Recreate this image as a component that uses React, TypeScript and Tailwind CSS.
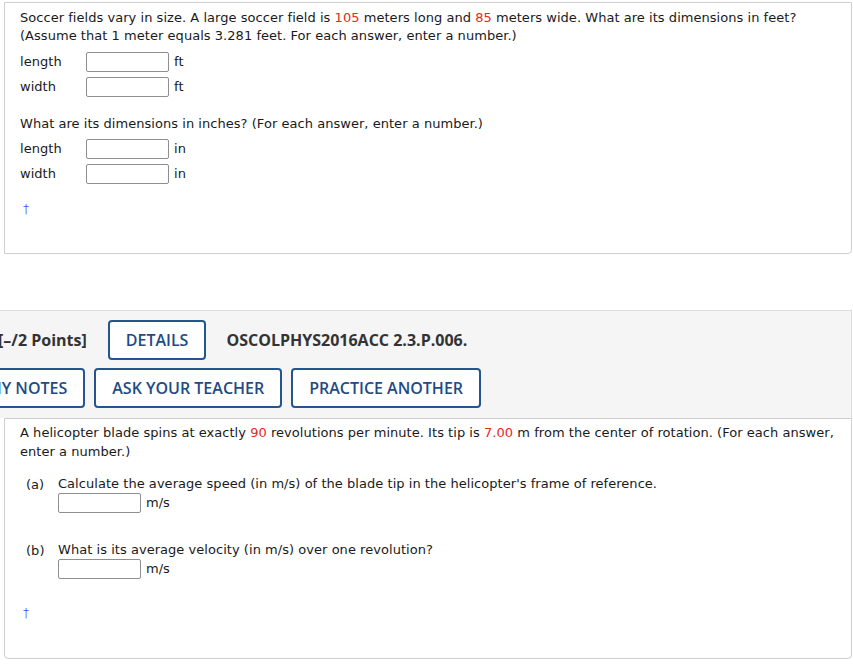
import React from "react";

const body = { fontFamily: '"DejaVu Sans", Verdana, sans-serif' };
const head = { fontFamily: '"Open Sans", "Noto Sans", sans-serif' };

function Box() {
  return <div className="w-[83px] h-[20px] border border-[#8f8f8f] rounded-[2px] bg-white" />;
}

function Row({ label, unit }: { label: string; unit: string }) {
  return (
    <div className="flex items-center h-[20px]">
      <span className="w-[66px]">{label}</span>
      <Box />
      <span className="ml-[5px]">{unit}</span>
    </div>
  );
}

function Btn({ children }: { children: React.ReactNode }) {
  return (
    <div className="h-[40px] px-[16px] flex items-center border-2 border-[#24558f] rounded-[4px] text-[#1f4b84] font-semibold text-[16px] whitespace-nowrap bg-white">
      {children}
    </div>
  );
}

export default function App() {
  return (
    <div className="w-[853px] h-[668px] bg-white overflow-hidden text-[13px] text-[#1a1a1a] tracking-[0.04px]" style={body}>
      <div className="h-[2px]" />
      <div className="ml-[4px] w-[848px] h-[252px] border border-[#cfcfcf] rounded-br-[4px] pl-[15px] pt-[6px]">
        <p className="leading-[18px]">
          Soccer fields vary in size. A large soccer field is <span className="text-[#e8281c]">105</span> meters long and{" "}
          <span className="text-[#e8281c]">85</span> meters wide. What are its dimensions in feet?
          <br />
          (Assume that 1 meter equals 3.281 feet. For each answer, enter a number.)
        </p>
        <div className="mt-[7px] flex flex-col gap-[5px]">
          <Row label="length" unit="ft" />
          <Row label="width" unit="ft" />
        </div>
        <p className="mt-[18px] leading-[18px]">What are its dimensions in inches? (For each answer, enter a number.)</p>
        <div className="mt-[6px] flex flex-col gap-[5px]">
          <Row label="length" unit="in" />
          <Row label="width" unit="in" />
        </div>
        <div className="mt-[16px] ml-[3px] text-[#0000ff] text-[12px] leading-[18px] font-light">†</div>
      </div>

      <div className="mt-[56px] w-[852px] h-[108px] bg-[#f5f5f5] border-t border-r border-[#dcdcdc] pt-[9px] overflow-hidden tracking-normal" style={head}>
        <div className="flex items-center gap-[21px] -ml-[2px] text-[#333]">
          <span className="font-bold text-[16px] whitespace-nowrap">[–/2 Points]</span>
          <Btn>DETAILS</Btn>
          <span className="font-bold text-[16px] whitespace-nowrap -ml-[1px]">OSCOLPHYS2016ACC 2.3.P.006.</span>
        </div>
        <div className="flex items-center gap-[9px] -ml-[31px] mt-[8px]">
          <Btn>MY NOTES</Btn>
          <Btn>ASK YOUR TEACHER</Btn>
          <Btn>PRACTICE ANOTHER</Btn>
        </div>
      </div>

      <div className="ml-[4px] w-[848px] h-[241px] border border-[#cfcfcf] rounded-b-[4px] pl-[15px] pt-[4px]">
        <p className="leading-[19px]">
          A helicopter blade spins at exactly <span className="text-[#e8281c]">90</span> revolutions per minute. Its tip is{" "}
          <span className="text-[#e8281c]">7.00</span> m from the center of rotation. (For each answer,
          <br />
          enter a number.)
        </p>
        <div className="mt-[14px] flex">
          <span className="ml-[6px] w-[32px]">(a)</span>
          <div>
            <div className="leading-[18px]">Calculate the average speed (in m/s) of the blade tip in the helicopter's frame of reference.</div>
            <div className="flex items-center h-[20px]">
              <Box />
              <span className="ml-[5px]">m/s</span>
            </div>
          </div>
        </div>
        <div className="mt-[28px] flex">
          <span className="ml-[6px] w-[32px]">(b)</span>
          <div>
            <div className="leading-[18px]">What is its average velocity (in m/s) over one revolution?</div>
            <div className="flex items-center h-[20px]">
              <Box />
              <span className="ml-[5px]">m/s</span>
            </div>
          </div>
        </div>
        <div className="mt-[25px] ml-[3px] text-[#0000ff] text-[12px] leading-[18px] font-light">†</div>
      </div>
    </div>
  );
}
